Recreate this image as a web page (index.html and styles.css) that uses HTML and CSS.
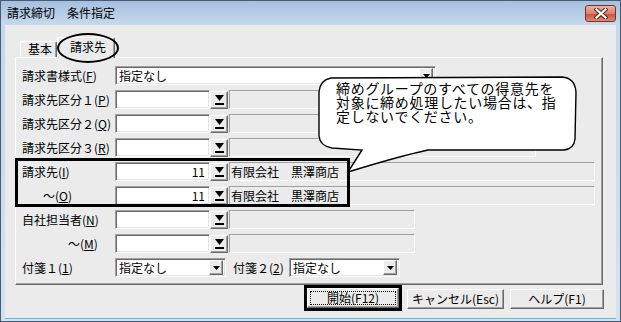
FILE: index.html
```html
<!DOCTYPE html>
<html lang="ja">
<head>
  <meta charset="UTF-8" />
  <title>請求締切　条件指定</title>
  <link rel="stylesheet" href="styles.css">
</head>
<body>
  <div class="window">
    <div class="titlebar">
      <span class="title">請求締切　条件指定</span>
      <div class="close-btn">
        <svg width="14" height="11" viewBox="0 0 14 11">
          <path d="M2.5 1.5 L11.5 9.5 M11.5 1.5 L2.5 9.5" stroke="#5a2019" stroke-width="4.2" stroke-linecap="square"/>
          <path d="M2.5 1.5 L11.5 9.5 M11.5 1.5 L2.5 9.5" stroke="#fff" stroke-width="2.2" stroke-linecap="square"/>
        </svg>
      </div>
    </div>

    <div class="client">
      <div class="tabs">
        <div class="tab">基本</div>
        <div class="tab active">請求先</div>
      </div>

      <div class="panel">
        <div class="row">
          <span class="lbl">請求書様式(<u>F</u>)</span>
          <div class="combo combo-wide">
            <span>指定なし</span>
            <span class="combo-btn"><svg width="7" height="4" viewBox="0 0 7 4"><path d="M0 0H7L3.5 4Z"/></svg></span>
          </div>
        </div>

        <div class="row">
          <span class="lbl">請求先区分１(<u>P</u>)</span>
          <div class="field"></div>
          <span class="lookup"><svg width="9" height="10" viewBox="0 0 9 10"><path d="M0 0H9L4.5 6Z"/><rect y="8" width="9" height="2"/></svg></span>
          <div class="disp disp-mid"></div>
        </div>

        <div class="row">
          <span class="lbl">請求先区分２(<u>Q</u>)</span>
          <div class="field"></div>
          <span class="lookup"><svg width="9" height="10" viewBox="0 0 9 10"><path d="M0 0H9L4.5 6Z"/><rect y="8" width="9" height="2"/></svg></span>
          <div class="disp disp-mid"></div>
        </div>

        <div class="row">
          <span class="lbl">請求先区分３(<u>R</u>)</span>
          <div class="field"></div>
          <span class="lookup"><svg width="9" height="10" viewBox="0 0 9 10"><path d="M0 0H9L4.5 6Z"/><rect y="8" width="9" height="2"/></svg></span>
          <div class="disp disp-mid"></div>
        </div>

        <div class="row">
          <span class="lbl">請求先(<u>I</u>)</span>
          <div class="field num">11</div>
          <span class="lookup"><svg width="9" height="10" viewBox="0 0 9 10"><path d="M0 0H9L4.5 6Z"/><rect y="8" width="9" height="2"/></svg></span>
          <div class="disp disp-long">有限会社　黒澤商店</div>
        </div>

        <div class="row">
          <span class="lbl lbl-to">～(<u>O</u>)</span>
          <div class="field num">11</div>
          <span class="lookup"><svg width="9" height="10" viewBox="0 0 9 10"><path d="M0 0H9L4.5 6Z"/><rect y="8" width="9" height="2"/></svg></span>
          <div class="disp disp-long">有限会社　黒澤商店</div>
        </div>

        <div class="row">
          <span class="lbl">自社担当者(<u>N</u>)</span>
          <div class="field"></div>
          <span class="lookup"><svg width="9" height="10" viewBox="0 0 9 10"><path d="M0 0H9L4.5 6Z"/><rect y="8" width="9" height="2"/></svg></span>
          <div class="disp disp-short"></div>
        </div>

        <div class="row">
          <span class="lbl lbl-to2">～(<u>M</u>)</span>
          <div class="field"></div>
          <span class="lookup"><svg width="9" height="10" viewBox="0 0 9 10"><path d="M0 0H9L4.5 6Z"/><rect y="8" width="9" height="2"/></svg></span>
          <div class="disp disp-short"></div>
        </div>

        <div class="row">
          <span class="lbl">付箋１(<u>1</u>)</span>
          <div class="combo combo-small">
            <span>指定なし</span>
            <span class="combo-btn"><svg width="7" height="4" viewBox="0 0 7 4"><path d="M0 0H7L3.5 4Z"/></svg></span>
          </div>
          <span class="lbl2">付箋２(<u>2</u>)</span>
          <div class="combo combo-small">
            <span>指定なし</span>
            <span class="combo-btn"><svg width="7" height="4" viewBox="0 0 7 4"><path d="M0 0H7L3.5 4Z"/></svg></span>
          </div>
        </div>
      </div>

      <div class="buttons">
        <button class="btn btn-default"><span class="focus">開始(F12)</span></button>
        <button class="btn btn-cancel">キャンセル(Esc)</button>
        <button class="btn btn-help">ヘルプ(F1)</button>
      </div>
    </div>

    <!-- annotations drawn over the dialog -->
    <div class="mark-oval"></div>
    <div class="mark-box"></div>
    <svg class="balloon" width="265" height="105" viewBox="315 72 265 105">
      <path d="M331 78 L562 77 Q575 78 576 92 L575 139 Q574 149 564 150 L428 150 Q400 156 348 172 L362 150 L332 148 Q320 146 319 136 L319 92 Q320 80 331 78 Z"
            fill="#fff" stroke="#000" stroke-width="1.4"/>
    </svg>
    <div class="balloon-text">締めグループのすべての得意先を<br>対象に締め処理したい場合は、指<br>定しないでください。</div>
  </div>
</body>
</html>
```

FILE: styles.css
```css
* {
  box-sizing: border-box;
}

html, body {
  margin: 0;
}

body {
  width: 621px;
  height: 322px;
  overflow: hidden;
  font-family: "Noto Sans CJK JP", "Noto Sans", sans-serif;
  font-size: 12px;
  color: #000;
}

.window {
  position: relative;
  width: 621px;
  height: 322px;
  padding: 1px 5px 4px 5px;
  background: linear-gradient(#c3d6ec, #d3e2f3);
  box-shadow: inset 0 0 0 1px #4a5a70;
  display: flex;
  flex-direction: column;
}

.titlebar {
  height: 24px;
  display: flex;
  align-items: flex-start;
  background: linear-gradient(#a4bfdf, #c6d9ee);
  margin: 0 -4px;
  padding: 0 4px;
}

.title {
  padding: 5px 0 0 2px;
  line-height: 14px;
  font-size: 12px;
}

.close-btn {
  margin-left: auto;
  margin-top: 4px;
  width: 31px;
  height: 17px;
  border: 1px solid #7a3128;
  border-radius: 3px;
  background: linear-gradient(#eab4a9, #d9826f 50%, #c5503e 51%, #dc8a76);
  display: flex;
  align-items: center;
  justify-content: center;
}

.client {
  flex: 1;
  background: #ebebeb;
  padding: 12px 0 0 10px;
  box-shadow: 0 1px 0 #4fc3e8;
}

/* tabs */
.tabs {
  display: flex;
  align-items: flex-end;
  height: 20px;
  padding-left: 5px;
}

.tab {
  height: 16px;
  width: 37px;
  padding-left: 3px;
  text-align: center;
  line-height: 14px;
  background: #ebebeb;
  border-top: 1px solid #fff;
  border-left: 1px solid #fff;
  border-right: 1px solid #696969;
  box-shadow: inset -1px 0 0 #a0a0a0;
  border-radius: 2px 2px 0 0;
}

.tab.active {
  position: relative;
  z-index: 1;
  width: 58px;
  height: 21px;
  margin-bottom: -1px;
  line-height: 18px;
  padding-left: 4px;
}

/* panel */
.panel {
  width: 588px;
  height: 228px;
  border-top: 1px solid #fff;
  border-left: 1px solid #fff;
  border-right: 1px solid #696969;
  border-bottom: 1px solid #696969;
  box-shadow: inset -1px -1px 0 #a0a0a0;
  padding: 8px 0 0 6px;
}

.row {
  display: flex;
  align-items: center;
  height: 19px;
  margin-bottom: 5px;
}

.lbl {
  width: 93px;
  white-space: nowrap;
}

.lbl-to {
  padding-left: 21px;
}

.lbl-to2 {
  padding-left: 46px;
}

.lbl2 {
  width: 63px;
  padding-left: 7px;
  white-space: nowrap;
}

.field,
.combo {
  border: 1px solid;
  border-color: #a0a0a0 #fff #fff #a0a0a0;
  box-shadow: inset 1px 1px 0 #696969, inset -1px -1px 0 #e3e3e3;
}

.field {
  width: 95px;
  height: 19px;
  background: #fff;
  line-height: 17px;
}

.field.num {
  text-align: right;
  padding-right: 4px;
}

.lookup {
  width: 18px;
  height: 18px;
  display: flex;
  align-items: center;
  justify-content: center;
  background: #ebebeb;
  border: 1px solid;
  border-color: #fff #696969 #696969 #fff;
  box-shadow: inset -1px -1px 0 #a0a0a0;
}

.disp {
  height: 19px;
  margin-left: 1px;
  padding-left: 1px;
  line-height: 17px;
  border: 1px solid;
  border-color: #a0a0a0 #fff #fff #a0a0a0;
  white-space: nowrap;
}

.disp-mid {
  width: 307px;
}

.disp-long {
  width: 366px;
}

.disp-short {
  width: 186px;
}

.combo {
  height: 19px;
  background: #fff;
  display: flex;
  align-items: center;
  justify-content: space-between;
  padding: 0 2px 0 3px;
}

.combo-wide {
  width: 321px;
}

.combo-small {
  width: 111px;
}

.combo-btn {
  width: 14px;
  height: 15px;
  display: flex;
  align-items: center;
  justify-content: center;
  background: #ebebeb;
  border: 1px solid;
  border-color: #fff #696969 #696969 #fff;
  box-shadow: inset -1px -1px 0 #a0a0a0;
}

/* bottom buttons */
.buttons {
  display: flex;
  align-items: flex-start;
  justify-content: flex-end;
  padding-right: 12px;
  margin-top: 3px;
}

.btn {
  height: 20px;
  padding: 0;
  font-family: inherit;
  font-size: 12px;
  color: #000;
  background: #ebebeb;
  border: 1px solid;
  border-color: #fff #696969 #696969 #fff;
  box-shadow: inset -1px -1px 0 #a0a0a0;
  line-height: 16px;
}

.btn-default {
  width: 92px;
  margin-right: 8px;
  outline: 3px solid #000;
  display: flex;
  align-items: center;
  justify-content: center;
}

.btn-default .focus {
  display: block;
  width: 86px;
  height: 14px;
  line-height: 12px;
  text-align: center;
  border: 1px dotted #000;
}

.btn-cancel {
  width: 97px;
  margin-top: 1px;
  margin-right: 6px;
}

.btn-help {
  width: 94px;
  margin-top: 1px;
}

/* annotations */
.mark-oval {
  position: absolute;
  left: 57px;
  top: 33px;
  width: 62px;
  height: 30px;
  border: 2px solid #000;
  border-radius: 50%;
  z-index: 2;
}

.mark-box {
  position: absolute;
  left: 15px;
  top: 158px;
  width: 335px;
  height: 49px;
  border: 3px solid #000;
  z-index: 2;
}

.balloon {
  position: absolute;
  left: 315px;
  top: 72px;
  z-index: 3;
}

.balloon-text {
  position: absolute;
  left: 336px;
  top: 81px;
  width: 240px;
  font-size: 14px;
  line-height: 14px;
  letter-spacing: 0.7px;
  white-space: nowrap;
  z-index: 4;
}
```
